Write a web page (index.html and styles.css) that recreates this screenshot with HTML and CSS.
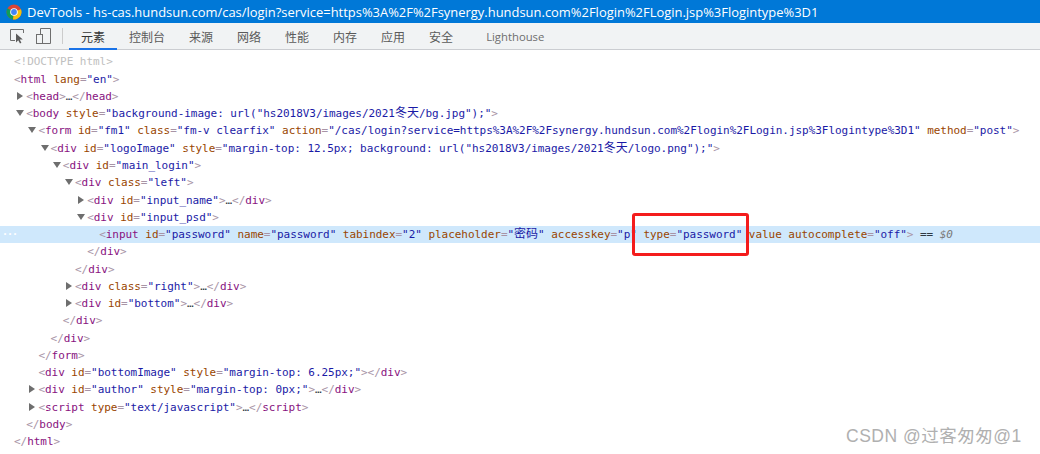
FILE: index.html
```html
<!DOCTYPE html>
<html lang="zh">
<head>
<meta charset="utf-8">
<title>DevTools</title>
<link rel="stylesheet" href="styles.css">
</head>
<body>
<header class="titlebar">
  <svg class="chrome-logo" width="16" height="16" viewBox="0 0 16 16">
    <circle cx="8" cy="8" r="7.5" fill="#db4437"/>
    <path d="M8 8 L1.5 4.2 A7.5 7.5 0 0 0 7 15.4 Z" fill="#0f9d58"/>
    <path d="M8 8 L15 5.2 A7.5 7.5 0 0 1 7 15.4 Z" fill="#f4c20d"/>
    <circle cx="8" cy="8" r="3.8" fill="#fff"/>
    <circle cx="8" cy="8" r="2.9" fill="#4285f4"/>
  </svg>
  <span class="title-text">DevTools - hs-cas.hundsun.com/cas/login?service=https%3A%2F%2Fsynergy.hundsun.com%2Flogin%2FLogin.jsp%3Flogintype%3D1</span>
</header>
<nav class="toolbar">
  <svg class="tool-icon" width="16" height="16" viewBox="0 0 16 16" fill="none">
    <path d="M5 12.5H0.5V1.5H13.5V5" stroke="#6e6e6e" stroke-width="1"/>
    <path d="M6 5.5V14.5L8.2 12.3L10 15.5L11.4 14.7L9.7 11.6H12.8Z" fill="#5a5a5a"/>
  </svg>
  <svg class="tool-icon second" width="16" height="16" viewBox="0 0 16 16" fill="none" stroke="#6e6e6e" stroke-width="1">
    <rect x="0.5" y="6.5" width="6" height="9"/>
    <path d="M4.5 6.5V0.5H14.5V15.5H6.5"/>
  </svg>
  <span class="divider"></span>
  <a class="tab active">元素</a>
  <a class="tab">控制台</a>
  <a class="tab">来源</a>
  <a class="tab">网络</a>
  <a class="tab">性能</a>
  <a class="tab">内存</a>
  <a class="tab">应用</a>
  <a class="tab">安全</a>
  <a class="tab lighthouse">Lighthouse</a>
</nav>
<main class="tree">
  <div class="row i0 doctype">&lt;!DOCTYPE html&gt;</div>
  <div class="row i0"><b>&lt;</b><u>html</u> <i>lang</i><b>=</b><s>"en"</s><b>&gt;</b></div>
  <div class="row i1"><span class="tri closed"></span><b>&lt;</b><u>head</u><b>&gt;</b>…<b>&lt;/</b><u>head</u><b>&gt;</b></div>
  <div class="row i1"><span class="tri open"></span><b>&lt;</b><u>body</u> <i>style</i><b>=</b><s>"background-image: url("hs2018V3/images/2021<span class="cjk">冬天</span>/bg.jpg");"</s><b>&gt;</b></div>
  <div class="row i2"><span class="tri open"></span><b>&lt;</b><u>form</u> <i>id</i><b>=</b><s>"fm1"</s> <i>class</i><b>=</b><s>"fm-v clearfix"</s> <i>action</i><b>=</b><s>"/cas/login?service=https%3A%2F%2Fsynergy.hundsun.com%2Flogin%2FLogin.jsp%3Flogintype%3D1"</s> <i>method</i><b>=</b><s>"post"</s><b>&gt;</b></div>
  <div class="row i3"><span class="tri open"></span><b>&lt;</b><u>div</u> <i>id</i><b>=</b><s>"logoImage"</s> <i>style</i><b>=</b><s>"margin-top: 12.5px; background: url("hs2018V3/images/2021<span class="cjk">冬天</span>/logo.png");"</s><b>&gt;</b></div>
  <div class="row i4"><span class="tri open"></span><b>&lt;</b><u>div</u> <i>id</i><b>=</b><s>"main_login"</s><b>&gt;</b></div>
  <div class="row i5"><span class="tri open"></span><b>&lt;</b><u>div</u> <i>class</i><b>=</b><s>"left"</s><b>&gt;</b></div>
  <div class="row i6"><span class="tri closed"></span><b>&lt;</b><u>div</u> <i>id</i><b>=</b><s>"input_name"</s><b>&gt;</b>…<b>&lt;/</b><u>div</u><b>&gt;</b></div>
  <div class="row i6"><span class="tri open"></span><b>&lt;</b><u>div</u> <i>id</i><b>=</b><s>"input_psd"</s><b>&gt;</b></div>
  <div class="row i7 selected"><span class="dots">···</span><b>&lt;</b><u>input</u> <i>id</i><b>=</b><s>"password"</s> <i>name</i><b>=</b><s>"password"</s> <i>tabindex</i><b>=</b><s>"2"</s> <i>placeholder</i><b>=</b><s>"<span class="cjk">密码</span>"</s> <i>accesskey</i><b>=</b><s>"p"</s> <i>type</i><b>=</b><s>"password"</s> <i>value</i> <i>autocomplete</i><b>=</b><s>"off"</s><b>&gt;</b> == <em>$0</em></div>
  <div class="row i6"><b>&lt;/</b><u>div</u><b>&gt;</b></div>
  <div class="row i5"><b>&lt;/</b><u>div</u><b>&gt;</b></div>
  <div class="row i5"><span class="tri closed"></span><b>&lt;</b><u>div</u> <i>class</i><b>=</b><s>"right"</s><b>&gt;</b>…<b>&lt;/</b><u>div</u><b>&gt;</b></div>
  <div class="row i5"><span class="tri closed"></span><b>&lt;</b><u>div</u> <i>id</i><b>=</b><s>"bottom"</s><b>&gt;</b>…<b>&lt;/</b><u>div</u><b>&gt;</b></div>
  <div class="row i4"><b>&lt;/</b><u>div</u><b>&gt;</b></div>
  <div class="row i3"><b>&lt;/</b><u>div</u><b>&gt;</b></div>
  <div class="row i2"><b>&lt;/</b><u>form</u><b>&gt;</b></div>
  <div class="row i2"><b>&lt;</b><u>div</u> <i>id</i><b>=</b><s>"bottomImage"</s> <i>style</i><b>=</b><s>"margin-top: 6.25px;"</s><b>&gt;&lt;/</b><u>div</u><b>&gt;</b></div>
  <div class="row i2"><span class="tri closed"></span><b>&lt;</b><u>div</u> <i>id</i><b>=</b><s>"author"</s> <i>style</i><b>=</b><s>"margin-top: 0px;"</s><b>&gt;</b>…<b>&lt;/</b><u>div</u><b>&gt;</b></div>
  <div class="row i2"><span class="tri closed"></span><b>&lt;</b><u>script</u> <i>type</i><b>=</b><s>"text/javascript"</s><b>&gt;</b>…<b>&lt;/</b><u>script</u><b>&gt;</b></div>
  <div class="row i1"><b>&lt;/</b><u>body</u><b>&gt;</b></div>
  <div class="row i0"><b>&lt;/</b><u>html</u><b>&gt;</b></div>
</main>
<div class="redbox"></div>
<div class="watermark">CSDN @过客匆匆@1</div>
</body>
</html>
```
FILE: styles.css
```css
* { box-sizing: border-box; }
html, body { margin: 0; height: 454px; overflow: hidden; background: #fff; }
body { position: relative; width: 1040px; font-family: "Open Sans", "Noto Sans CJK SC", sans-serif; }

.titlebar { height: 23px; background: #0078d7; color: #fff; display: flex; align-items: center; padding-left: 6px; }
.chrome-logo { flex: none; margin-right: 5px; }
.title-text { font-size: 12.95px; white-space: nowrap; font-family: "Open Sans", sans-serif; }

.toolbar { height: 27px; background: #f1f3f4; border-bottom: 1px solid #cbcdd1; display: flex; align-items: stretch; padding-left: 10px; font-size: 12px; color: #5a5a5a; }
.tool-icon { flex: none; align-self: center; }
.tool-icon.second { margin-left: 10px; }
.divider { flex: none; width: 1px; height: 16px; background: #ccc; align-self: center; margin: 0 6px 0 10px; }
.tab { padding: 1px 12px 0; display: flex; align-items: center; font-family: "Noto Sans CJK SC", sans-serif; border-bottom: 2px solid transparent; margin-bottom: -1px; }
.tab.active { color: #333; border-bottom-color: #1a73e8; }
.lighthouse { margin-left: 9px; font-family: "Open Sans", sans-serif; font-size: 11.3px; color: #6e6e6e; }

.tree { padding-top: 3.4px; font-family: "DejaVu Sans Mono", "Noto Sans CJK SC", monospace; font-size: 11px; letter-spacing: -0.04px; color: #303942; }
.row { height: 17.27px; line-height: 17.27px; white-space: nowrap; position: relative; }
.row b { font-weight: normal; color: #a894a6; }
.row u { text-decoration: none; color: #881280; }
.row i { font-style: normal; color: #994500; }
.row s { text-decoration: none; color: #1a1aa6; }
.row em { font-style: italic; color: #7a7a7a; }
.cjk { font-size: 12px; line-height: 1; font-family: "Noto Sans CJK SC", sans-serif; letter-spacing: 0; }
.doctype { color: #c0c0c0; }
.i0 { padding-left: 14px; }
.i1 { padding-left: 26.2px; }
.i2 { padding-left: 38.4px; }
.i3 { padding-left: 50.6px; }
.i4 { padding-left: 62.8px; }
.i5 { padding-left: 75px; }
.i6 { padding-left: 87.2px; }
.i7 { padding-left: 99.2px; }
.selected { background: #cfe8fc; }
.dots { position: absolute; left: 2px; top: 0; color: #fff; font-weight: bold; font-size: 10px; letter-spacing: -1px; }
.tri { position: absolute; width: 0; height: 0; border-style: solid; }
.tri.closed { border-width: 4px 0 4px 6px; border-color: transparent transparent transparent #6e6e6e; margin-left: -9.5px; margin-top: 4px; }
.tri.open { border-width: 6px 4px 0 4px; border-color: #6e6e6e transparent transparent transparent; margin-left: -10px; margin-top: 5px; }

.redbox { position: absolute; left: 632px; top: 213px; width: 117px; height: 43px; border: 3px solid #f41c1c; border-radius: 3px; }
.watermark { position: absolute; left: 846px; top: 422px; font-family: "Liberation Sans", "Noto Sans CJK SC", sans-serif; font-size: 17.5px; letter-spacing: 0.5px; color: #b0b0b0; white-space: nowrap; }
```
